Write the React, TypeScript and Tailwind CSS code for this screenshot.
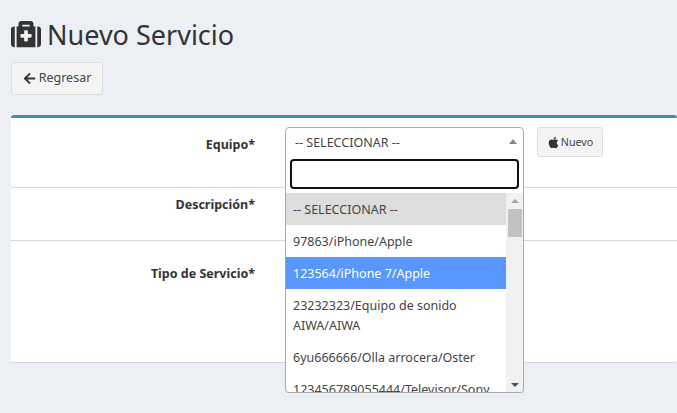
import { FaApple, FaArrowLeft, FaMedkit } from 'react-icons/fa';

const OPTIONS = [
  { text: '-- SELECCIONAR --', cls: 'bg-[#ddd]' },
  { text: '97863/iPhone/Apple', cls: '' },
  { text: '123564/iPhone 7/Apple', cls: 'bg-[#5897fb] text-white' },
  { text: '23232323/Equipo de sonido AIWA/AIWA', cls: '' },
  { text: '6yu666666/Olla arrocera/Oster', cls: '' },
  { text: '123456789055444/Televisor/Sony', cls: '' },
];

function Dropdown() {
  return (
    <div className="absolute -left-px top-full z-10 h-[239px] w-[239px] overflow-hidden rounded-b-[4px] border border-t-0 border-[#aaa] bg-white">
      <div className="px-[4px] pb-[4px] pt-[5px]">
        <div className="h-[30px] rounded-[4px] border-2 border-[#111] bg-white" />
      </div>
      <div className="flex h-[200px]">
        <ul className="w-[220px] overflow-hidden">
          {OPTIONS.map((o) => (
            <li key={o.text} className={`px-[7px] pb-[5px] pt-[7px] text-[12.5px] leading-[20px] ${o.cls}`}>
              {o.text}
            </li>
          ))}
        </ul>
        <div className="flex w-[17px] flex-col items-center bg-[#f1f1f1]">
          <div className="mt-[6px] h-0 w-0 border-x-[4px] border-b-[4px] border-x-transparent border-b-[#a3a3a3]" />
          <div className="mt-[6px] h-[28px] w-[14px] bg-[#c1c1c1]" />
          <div className="mb-[6px] mt-auto h-0 w-0 border-x-[4px] border-t-[4px] border-x-transparent border-t-[#505050]" />
        </div>
      </div>
    </div>
  );
}

export default function App() {
  return (
    <div
      className="h-[413px] w-[677px] overflow-hidden bg-[#ecf0f5] pl-[11px] text-[#444]"
      style={{ fontFamily: '"Noto Sans", sans-serif' }}
    >
      <h1 className="flex h-[62px] items-center gap-[6px] pt-[6px] text-[27px] font-normal leading-none text-[#333]">
        <FaMedkit className="text-[30px]" />
        Nuevo Servicio
      </h1>
      <button className="flex h-[33px] w-[92px] items-center justify-center gap-[3px] rounded-[3px] border border-[#ddd] bg-[#f4f4f4] text-[12.5px]">
        <FaArrowLeft className="text-[13px] text-[#333]" />
        Regresar
      </button>

      <div className="mt-[20px] h-[248px] rounded-[3px] border-t-[3px] border-b border-t-[#3c8dbc] border-b-[#d2d6de] bg-white">
        <div className="flex h-[70px] border-b border-[#d2d6de] pt-[9px]">
          <label className="w-[244px] pt-[8px] text-right text-[12.5px] font-bold leading-[20px] text-[#333]">Equipo*</label>
          <div className="relative ml-[30px] h-[28px] w-[239px] rounded-t-[4px] border border-[#aaa] bg-white">
            <div className="px-[9px] text-[12.5px] leading-[28px] pt-px">-- SELECCIONAR --</div>
            <div className="absolute right-[6px] top-[11px] h-0 w-0 border-x-[4px] border-b-[5px] border-x-transparent border-b-[#888]" />
            <Dropdown />
          </div>
          <button className="ml-[13px] flex h-[30px] w-[66px] items-center justify-center gap-px rounded-[3px] border border-[#ddd] bg-[#f4f4f4] text-[10.7px]">
            <FaApple className="text-[13px] text-[#333]" />
            Nuevo
          </button>
        </div>
        <div className="h-[53px] border-b border-[#d2d6de] pt-[7px]">
          <label className="block w-[244px] text-right text-[12.5px] font-bold leading-[20px] text-[#333]">Descripción*</label>
        </div>
        <div className="pt-[23px]">
          <label className="block w-[244px] text-right text-[12.5px] font-bold leading-[20px] text-[#333]">Tipo de Servicio*</label>
        </div>
      </div>
    </div>
  );
}
